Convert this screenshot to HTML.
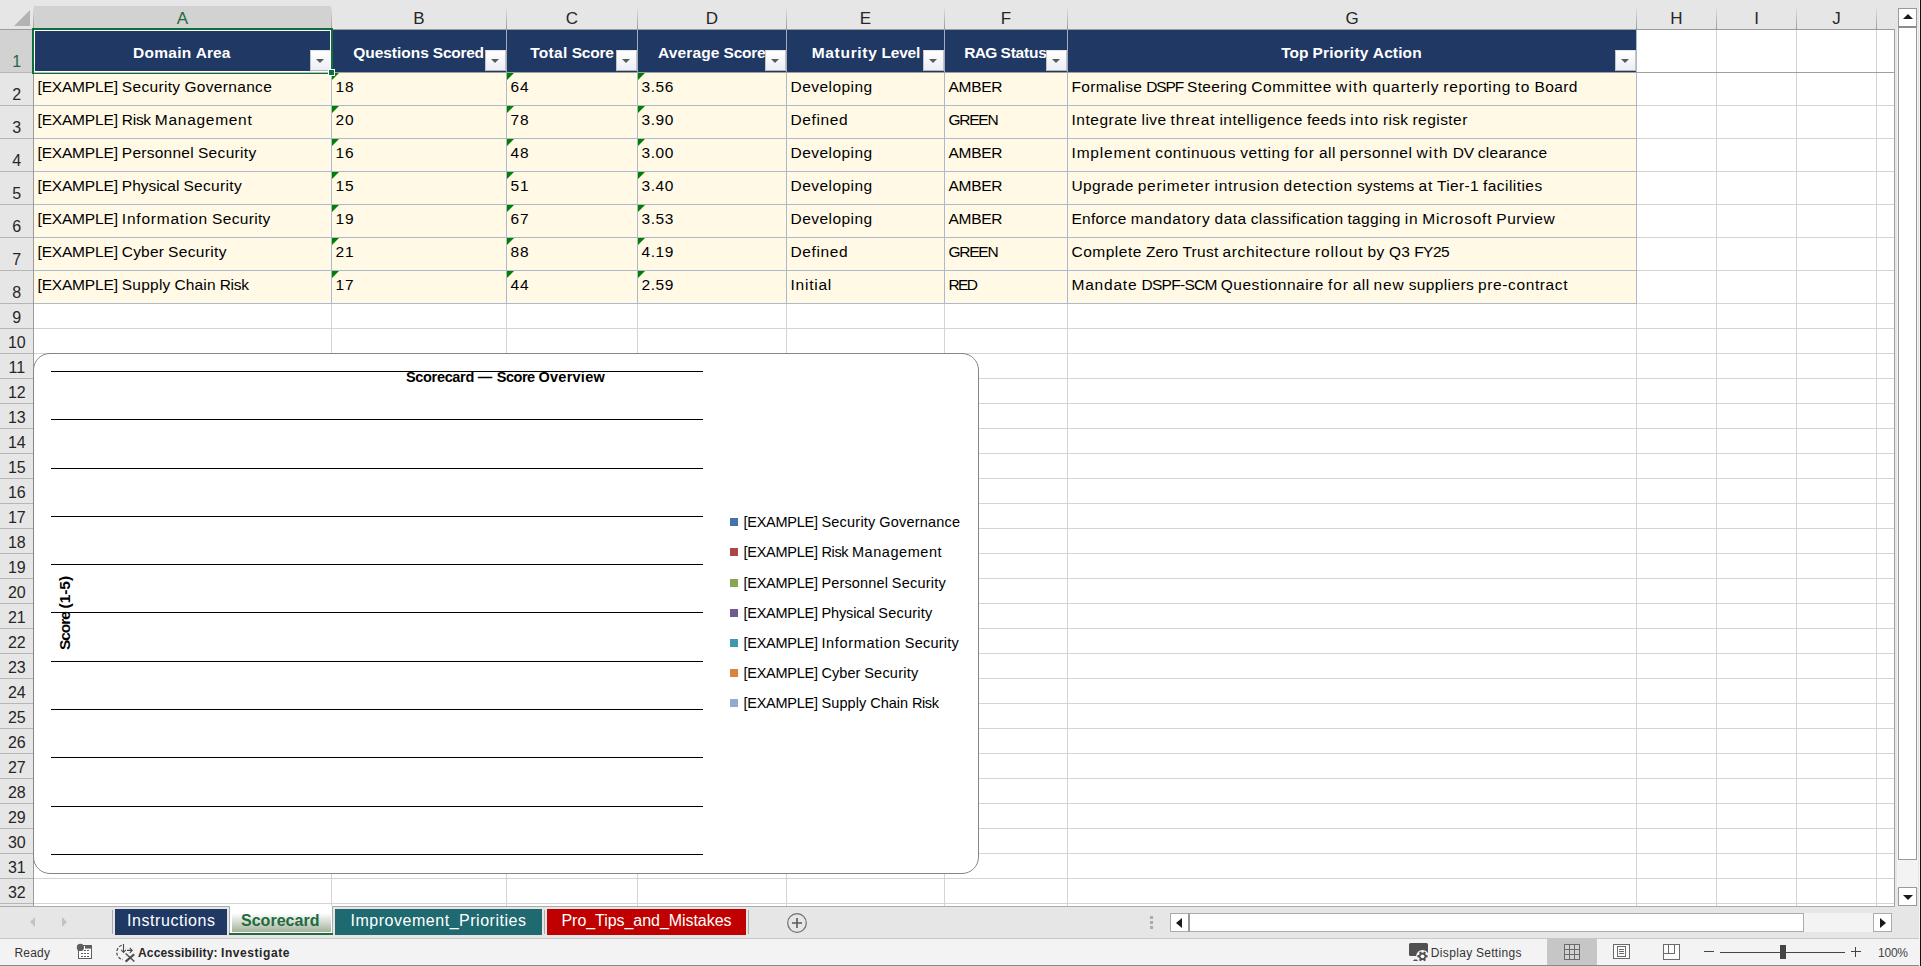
<!DOCTYPE html>
<html lang="en"><head><meta charset="utf-8"><title>Scorecard</title>
<style>
html,body{margin:0;padding:0;background:#e6e6e6;overflow:hidden;}
#app{position:relative;width:1921px;height:966px;overflow:hidden;background:#e6e6e6;font-family:"Liberation Sans",sans-serif;}
#app>div,#app>span,#app>svg{position:absolute;display:block;}
#app>span{white-space:pre;}
</style></head>
<body>
<div id="app">
<div style="left:34px;top:30px;width:1860px;height:876px;background:#fff;"></div>
<div style="left:331px;top:30px;width:1px;height:876px;background:#d4d4d4;"></div>
<div style="left:506px;top:30px;width:1px;height:876px;background:#d4d4d4;"></div>
<div style="left:637px;top:30px;width:1px;height:876px;background:#d4d4d4;"></div>
<div style="left:786px;top:30px;width:1px;height:876px;background:#d4d4d4;"></div>
<div style="left:944px;top:30px;width:1px;height:876px;background:#d4d4d4;"></div>
<div style="left:1067px;top:30px;width:1px;height:876px;background:#d4d4d4;"></div>
<div style="left:1636px;top:30px;width:1px;height:876px;background:#d4d4d4;"></div>
<div style="left:1716px;top:30px;width:1px;height:876px;background:#d4d4d4;"></div>
<div style="left:1796px;top:30px;width:1px;height:876px;background:#d4d4d4;"></div>
<div style="left:1876px;top:30px;width:1px;height:876px;background:#d4d4d4;"></div>
<div style="left:34px;top:72px;width:1860px;height:1px;background:#d4d4d4;"></div>
<div style="left:34px;top:105px;width:1860px;height:1px;background:#d4d4d4;"></div>
<div style="left:34px;top:138px;width:1860px;height:1px;background:#d4d4d4;"></div>
<div style="left:34px;top:171px;width:1860px;height:1px;background:#d4d4d4;"></div>
<div style="left:34px;top:204px;width:1860px;height:1px;background:#d4d4d4;"></div>
<div style="left:34px;top:237px;width:1860px;height:1px;background:#d4d4d4;"></div>
<div style="left:34px;top:270px;width:1860px;height:1px;background:#d4d4d4;"></div>
<div style="left:34px;top:303px;width:1860px;height:1px;background:#d4d4d4;"></div>
<div style="left:34px;top:328px;width:1860px;height:1px;background:#d4d4d4;"></div>
<div style="left:34px;top:353px;width:1860px;height:1px;background:#d4d4d4;"></div>
<div style="left:34px;top:378px;width:1860px;height:1px;background:#d4d4d4;"></div>
<div style="left:34px;top:403px;width:1860px;height:1px;background:#d4d4d4;"></div>
<div style="left:34px;top:428px;width:1860px;height:1px;background:#d4d4d4;"></div>
<div style="left:34px;top:453px;width:1860px;height:1px;background:#d4d4d4;"></div>
<div style="left:34px;top:478px;width:1860px;height:1px;background:#d4d4d4;"></div>
<div style="left:34px;top:503px;width:1860px;height:1px;background:#d4d4d4;"></div>
<div style="left:34px;top:528px;width:1860px;height:1px;background:#d4d4d4;"></div>
<div style="left:34px;top:553px;width:1860px;height:1px;background:#d4d4d4;"></div>
<div style="left:34px;top:578px;width:1860px;height:1px;background:#d4d4d4;"></div>
<div style="left:34px;top:603px;width:1860px;height:1px;background:#d4d4d4;"></div>
<div style="left:34px;top:628px;width:1860px;height:1px;background:#d4d4d4;"></div>
<div style="left:34px;top:653px;width:1860px;height:1px;background:#d4d4d4;"></div>
<div style="left:34px;top:678px;width:1860px;height:1px;background:#d4d4d4;"></div>
<div style="left:34px;top:703px;width:1860px;height:1px;background:#d4d4d4;"></div>
<div style="left:34px;top:728px;width:1860px;height:1px;background:#d4d4d4;"></div>
<div style="left:34px;top:753px;width:1860px;height:1px;background:#d4d4d4;"></div>
<div style="left:34px;top:778px;width:1860px;height:1px;background:#d4d4d4;"></div>
<div style="left:34px;top:803px;width:1860px;height:1px;background:#d4d4d4;"></div>
<div style="left:34px;top:828px;width:1860px;height:1px;background:#d4d4d4;"></div>
<div style="left:34px;top:853px;width:1860px;height:1px;background:#d4d4d4;"></div>
<div style="left:34px;top:878px;width:1860px;height:1px;background:#d4d4d4;"></div>
<div style="left:34px;top:903px;width:1860px;height:1px;background:#d4d4d4;"></div>
<div style="left:34px;top:30px;width:1602px;height:42px;background:#203864;"></div>
<div style="left:331px;top:30px;width:1px;height:42px;background:#a3abbd;"></div>
<div style="left:506px;top:30px;width:1px;height:42px;background:#a3abbd;"></div>
<div style="left:637px;top:30px;width:1px;height:42px;background:#a3abbd;"></div>
<div style="left:786px;top:30px;width:1px;height:42px;background:#a3abbd;"></div>
<div style="left:944px;top:30px;width:1px;height:42px;background:#a3abbd;"></div>
<div style="left:1067px;top:30px;width:1px;height:42px;background:#a3abbd;"></div>
<div style="left:1636px;top:30px;width:1px;height:42px;background:#adb9ca;"></div>
<div style="left:34px;top:73px;width:1602px;height:230px;background:#fff9e6;"></div>
<div style="left:331px;top:73px;width:1px;height:231px;background:#adb9ca;"></div>
<div style="left:506px;top:73px;width:1px;height:231px;background:#adb9ca;"></div>
<div style="left:637px;top:73px;width:1px;height:231px;background:#adb9ca;"></div>
<div style="left:786px;top:73px;width:1px;height:231px;background:#adb9ca;"></div>
<div style="left:944px;top:73px;width:1px;height:231px;background:#adb9ca;"></div>
<div style="left:1067px;top:73px;width:1px;height:231px;background:#adb9ca;"></div>
<div style="left:1636px;top:73px;width:1px;height:231px;background:#adb9ca;"></div>
<div style="left:34px;top:105px;width:1603px;height:1px;background:#adb9ca;"></div>
<div style="left:34px;top:138px;width:1603px;height:1px;background:#adb9ca;"></div>
<div style="left:34px;top:171px;width:1603px;height:1px;background:#adb9ca;"></div>
<div style="left:34px;top:204px;width:1603px;height:1px;background:#adb9ca;"></div>
<div style="left:34px;top:237px;width:1603px;height:1px;background:#adb9ca;"></div>
<div style="left:34px;top:270px;width:1603px;height:1px;background:#adb9ca;"></div>
<div style="left:34px;top:303px;width:1603px;height:1px;background:#adb9ca;"></div>
<div style="left:34px;top:72px;width:1860px;height:1px;background:#a0a0a0;"></div>
<div style="left:34px;top:29px;width:1860px;height:1px;background:#9b9b9b;"></div>
<div style="left:1894px;top:29px;width:1px;height:878px;background:#a0a0a0;"></div>
<div style="left:0px;top:906px;width:1895px;height:1px;background:#ababab;"></div>
<div style="left:332px;top:73px;width:0;height:0;border-top:7px solid #008000;border-right:7px solid transparent"></div>
<div style="left:332px;top:106px;width:0;height:0;border-top:7px solid #008000;border-right:7px solid transparent"></div>
<div style="left:332px;top:139px;width:0;height:0;border-top:7px solid #008000;border-right:7px solid transparent"></div>
<div style="left:332px;top:172px;width:0;height:0;border-top:7px solid #008000;border-right:7px solid transparent"></div>
<div style="left:332px;top:205px;width:0;height:0;border-top:7px solid #008000;border-right:7px solid transparent"></div>
<div style="left:332px;top:238px;width:0;height:0;border-top:7px solid #008000;border-right:7px solid transparent"></div>
<div style="left:332px;top:271px;width:0;height:0;border-top:7px solid #008000;border-right:7px solid transparent"></div>
<div style="left:507px;top:73px;width:0;height:0;border-top:7px solid #008000;border-right:7px solid transparent"></div>
<div style="left:507px;top:106px;width:0;height:0;border-top:7px solid #008000;border-right:7px solid transparent"></div>
<div style="left:507px;top:139px;width:0;height:0;border-top:7px solid #008000;border-right:7px solid transparent"></div>
<div style="left:507px;top:172px;width:0;height:0;border-top:7px solid #008000;border-right:7px solid transparent"></div>
<div style="left:507px;top:205px;width:0;height:0;border-top:7px solid #008000;border-right:7px solid transparent"></div>
<div style="left:507px;top:238px;width:0;height:0;border-top:7px solid #008000;border-right:7px solid transparent"></div>
<div style="left:507px;top:271px;width:0;height:0;border-top:7px solid #008000;border-right:7px solid transparent"></div>
<div style="left:638px;top:73px;width:0;height:0;border-top:7px solid #008000;border-right:7px solid transparent"></div>
<div style="left:638px;top:106px;width:0;height:0;border-top:7px solid #008000;border-right:7px solid transparent"></div>
<div style="left:638px;top:139px;width:0;height:0;border-top:7px solid #008000;border-right:7px solid transparent"></div>
<div style="left:638px;top:172px;width:0;height:0;border-top:7px solid #008000;border-right:7px solid transparent"></div>
<div style="left:638px;top:205px;width:0;height:0;border-top:7px solid #008000;border-right:7px solid transparent"></div>
<div style="left:638px;top:238px;width:0;height:0;border-top:7px solid #008000;border-right:7px solid transparent"></div>
<div style="left:638px;top:271px;width:0;height:0;border-top:7px solid #008000;border-right:7px solid transparent"></div>
<span style="left:133.10px;top:45px;font-size:15.5px;line-height:15.5px;color:#fff;font-weight:700;word-spacing:-0.253px;"><span style="display:inline-block;width:58.48px;letter-spacing:0.273px">Domain</span> <span style="display:inline-block;width:34.96px;letter-spacing:0.123px">Area</span></span>
<span style="left:353.20px;top:45px;font-size:15.5px;line-height:15.5px;color:#fff;font-weight:700;word-spacing:-0.218px;"><span style="display:inline-block;width:75.55px;letter-spacing:-0.027px">Questions</span> <span style="display:inline-block;width:50.85px;letter-spacing:-0.285px">Scored</span></span>
<span style="left:530.15px;top:45px;font-size:15.5px;line-height:15.5px;color:#fff;font-weight:700;word-spacing:-0.136px;"><span style="display:inline-block;width:37.36px;letter-spacing:0.298px">Total</span> <span style="display:inline-block;width:41.96px;letter-spacing:-0.227px">Score</span></span>
<span style="left:658.10px;top:45px;font-size:15.5px;line-height:15.5px;color:#fff;font-weight:700;word-spacing:-0.163px;"><span style="display:inline-block;width:61.36px;letter-spacing:0.107px">Average</span> <span style="display:inline-block;width:41.69px;letter-spacing:-0.280px">Score</span></span>
<span style="left:811.70px;top:45px;font-size:15.5px;line-height:15.5px;color:#fff;font-weight:700;word-spacing:-0.248px;"><span style="display:inline-block;width:65.86px;letter-spacing:0.696px">Maturity</span> <span style="display:inline-block;width:38.37px;letter-spacing:-0.253px">Level</span></span>
<span style="left:964.30px;top:45px;font-size:15.5px;line-height:15.5px;color:#fff;font-weight:700;word-spacing:-0.259px;"><span style="display:inline-block;width:32.16px;letter-spacing:-0.764px">RAG</span> <span style="display:inline-block;width:46.19px;letter-spacing:-0.198px">Status</span></span>
<span style="left:1281.30px;top:45px;font-size:15.5px;line-height:15.5px;color:#fff;font-weight:700;word-spacing:-0.196px;"><span style="display:inline-block;width:27.00px;letter-spacing:-0.089px">Top</span> <span style="display:inline-block;width:56.30px;letter-spacing:0.254px">Priority</span> <span style="display:inline-block;width:48.87px;letter-spacing:0.108px">Action</span></span>
<span style="left:37.50px;top:79px;font-size:15.5px;line-height:15.5px;color:#000;word-spacing:-0.261px;"><span style="display:inline-block;width:80.27px;letter-spacing:-0.175px">[EXAMPLE]</span> <span style="display:inline-block;width:58.62px;letter-spacing:0.327px">Security</span> <span style="display:inline-block;width:87.67px;letter-spacing:0.321px">Governance</span></span>
<span style="left:335.50px;top:79px;font-size:15.5px;line-height:15.5px;color:#000;letter-spacing:0.916px;">18</span>
<span style="left:510.50px;top:79px;font-size:15.5px;line-height:15.5px;color:#000;letter-spacing:0.916px;">64</span>
<span style="left:641.50px;top:79px;font-size:15.5px;line-height:15.5px;color:#000;letter-spacing:0.534px;">3.56</span>
<span style="left:790.50px;top:79px;font-size:15.5px;line-height:15.5px;color:#000;letter-spacing:0.452px;">Developing</span>
<span style="left:948.50px;top:79px;font-size:15.5px;line-height:15.5px;color:#000;letter-spacing:-0.302px;">AMBER</span>
<span style="left:1071.50px;top:79px;font-size:15.5px;line-height:15.5px;color:#000;word-spacing:-0.261px;"><span style="display:inline-block;width:70.74px;letter-spacing:0.299px">Formalise</span> <span style="display:inline-block;width:36.75px;letter-spacing:-1.148px">DSPF</span> <span style="display:inline-block;width:60.09px;letter-spacing:0.294px">Steering</span> <span style="display:inline-block;width:80.76px;letter-spacing:0.647px">Committee</span> <span style="display:inline-block;width:32.34px;letter-spacing:1.191px">with</span> <span style="display:inline-block;width:66.86px;letter-spacing:0.728px">quarterly</span> <span style="display:inline-block;width:67.87px;letter-spacing:0.743px">reporting</span> <span style="display:inline-block;width:15.28px;letter-spacing:1.170px">to</span> <span style="display:inline-block;width:43.20px;letter-spacing:0.365px">Board</span></span>
<span style="left:37.50px;top:112px;font-size:15.5px;line-height:15.5px;color:#000;word-spacing:-0.261px;"><span style="display:inline-block;width:80.27px;letter-spacing:-0.175px">[EXAMPLE]</span> <span style="display:inline-block;width:29.00px;letter-spacing:-0.286px">Risk</span> <span style="display:inline-block;width:97.59px;letter-spacing:0.711px">Management</span></span>
<span style="left:335.50px;top:112px;font-size:15.5px;line-height:15.5px;color:#000;letter-spacing:0.916px;">20</span>
<span style="left:510.50px;top:112px;font-size:15.5px;line-height:15.5px;color:#000;letter-spacing:0.916px;">78</span>
<span style="left:641.50px;top:112px;font-size:15.5px;line-height:15.5px;color:#000;letter-spacing:0.534px;">3.90</span>
<span style="left:790.50px;top:112px;font-size:15.5px;line-height:15.5px;color:#000;letter-spacing:0.596px;">Defined</span>
<span style="left:948.50px;top:112px;font-size:15.5px;line-height:15.5px;color:#000;letter-spacing:-1.255px;">GREEN</span>
<span style="left:1071.50px;top:112px;font-size:15.5px;line-height:15.5px;color:#000;word-spacing:-0.261px;"><span style="display:inline-block;width:65.95px;letter-spacing:0.529px">Integrate</span> <span style="display:inline-block;width:25.06px;letter-spacing:0.449px">live</span> <span style="display:inline-block;width:44.77px;letter-spacing:0.854px">threat</span> <span style="display:inline-block;width:83.54px;letter-spacing:0.498px">intelligence</span> <span style="display:inline-block;width:39.28px;letter-spacing:0.271px">feeds</span> <span style="display:inline-block;width:28.64px;letter-spacing:0.910px">into</span> <span style="display:inline-block;width:25.52px;letter-spacing:0.352px">risk</span> <span style="display:inline-block;width:55.26px;letter-spacing:0.446px">register</span></span>
<span style="left:37.50px;top:145px;font-size:15.5px;line-height:15.5px;color:#000;word-spacing:-0.261px;"><span style="display:inline-block;width:80.27px;letter-spacing:-0.175px">[EXAMPLE]</span> <span style="display:inline-block;width:72.08px;letter-spacing:0.253px">Personnel</span> <span style="display:inline-block;width:58.62px;letter-spacing:0.327px">Security</span></span>
<span style="left:335.50px;top:145px;font-size:15.5px;line-height:15.5px;color:#000;letter-spacing:0.916px;">16</span>
<span style="left:510.50px;top:145px;font-size:15.5px;line-height:15.5px;color:#000;letter-spacing:0.916px;">48</span>
<span style="left:641.50px;top:145px;font-size:15.5px;line-height:15.5px;color:#000;letter-spacing:0.534px;">3.00</span>
<span style="left:790.50px;top:145px;font-size:15.5px;line-height:15.5px;color:#000;letter-spacing:0.452px;">Developing</span>
<span style="left:948.50px;top:145px;font-size:15.5px;line-height:15.5px;color:#000;letter-spacing:-0.302px;">AMBER</span>
<span style="left:1071.50px;top:145px;font-size:15.5px;line-height:15.5px;color:#000;word-spacing:-0.261px;"><span style="display:inline-block;width:79.76px;letter-spacing:0.820px">Implement</span> <span style="display:inline-block;width:80.82px;letter-spacing:0.583px">continuous</span> <span style="display:inline-block;width:49.93px;letter-spacing:0.608px">vetting</span> <span style="display:inline-block;width:20.79px;letter-spacing:0.899px">for</span> <span style="display:inline-block;width:16.81px;letter-spacing:0.431px">all</span> <span style="display:inline-block;width:72.59px;letter-spacing:0.501px">personnel</span> <span style="display:inline-block;width:32.34px;letter-spacing:1.191px">with</span> <span style="display:inline-block;width:20.98px;letter-spacing:-0.282px">DV</span> <span style="display:inline-block;width:69.57px;letter-spacing:0.261px">clearance</span></span>
<span style="left:37.50px;top:178px;font-size:15.5px;line-height:15.5px;color:#000;word-spacing:-0.261px;"><span style="display:inline-block;width:80.27px;letter-spacing:-0.175px">[EXAMPLE]</span> <span style="display:inline-block;width:57.53px;letter-spacing:-0.023px">Physical</span> <span style="display:inline-block;width:58.62px;letter-spacing:0.327px">Security</span></span>
<span style="left:335.50px;top:178px;font-size:15.5px;line-height:15.5px;color:#000;letter-spacing:0.916px;">15</span>
<span style="left:510.50px;top:178px;font-size:15.5px;line-height:15.5px;color:#000;letter-spacing:0.916px;">51</span>
<span style="left:641.50px;top:178px;font-size:15.5px;line-height:15.5px;color:#000;letter-spacing:0.534px;">3.40</span>
<span style="left:790.50px;top:178px;font-size:15.5px;line-height:15.5px;color:#000;letter-spacing:0.452px;">Developing</span>
<span style="left:948.50px;top:178px;font-size:15.5px;line-height:15.5px;color:#000;letter-spacing:-0.302px;">AMBER</span>
<span style="left:1071.50px;top:178px;font-size:15.5px;line-height:15.5px;color:#000;word-spacing:-0.261px;"><span style="display:inline-block;width:62.14px;letter-spacing:0.382px">Upgrade</span> <span style="display:inline-block;width:72.80px;letter-spacing:0.815px">perimeter</span> <span style="display:inline-block;width:65.01px;letter-spacing:0.713px">intrusion</span> <span style="display:inline-block;width:69.39px;letter-spacing:0.719px">detection</span> <span style="display:inline-block;width:57.49px;letter-spacing:0.092px">systems</span> <span style="display:inline-block;width:14.42px;letter-spacing:0.741px">at</span> <span style="display:inline-block;width:42.06px;letter-spacing:0.358px">Tier-1</span> <span style="display:inline-block;width:59.53px;letter-spacing:0.439px">facilities</span></span>
<span style="left:37.50px;top:211px;font-size:15.5px;line-height:15.5px;color:#000;word-spacing:-0.261px;"><span style="display:inline-block;width:80.27px;letter-spacing:-0.175px">[EXAMPLE]</span> <span style="display:inline-block;width:86.20px;letter-spacing:0.786px">Information</span> <span style="display:inline-block;width:58.62px;letter-spacing:0.327px">Security</span></span>
<span style="left:335.50px;top:211px;font-size:15.5px;line-height:15.5px;color:#000;letter-spacing:0.916px;">19</span>
<span style="left:510.50px;top:211px;font-size:15.5px;line-height:15.5px;color:#000;letter-spacing:0.916px;">67</span>
<span style="left:641.50px;top:211px;font-size:15.5px;line-height:15.5px;color:#000;letter-spacing:0.534px;">3.53</span>
<span style="left:790.50px;top:211px;font-size:15.5px;line-height:15.5px;color:#000;letter-spacing:0.452px;">Developing</span>
<span style="left:948.50px;top:211px;font-size:15.5px;line-height:15.5px;color:#000;letter-spacing:-0.302px;">AMBER</span>
<span style="left:1071.50px;top:211px;font-size:15.5px;line-height:15.5px;color:#000;word-spacing:-0.261px;"><span style="display:inline-block;width:55.08px;letter-spacing:0.237px">Enforce</span> <span style="display:inline-block;width:79.87px;letter-spacing:0.737px">mandatory</span> <span style="display:inline-block;width:32.20px;letter-spacing:0.507px">data</span> <span style="display:inline-block;width:92.58px;letter-spacing:0.336px">classification</span> <span style="display:inline-block;width:53.37px;letter-spacing:0.358px">tagging</span> <span style="display:inline-block;width:13.53px;letter-spacing:0.725px">in</span> <span style="display:inline-block;width:69.91px;letter-spacing:0.782px">Microsoft</span> <span style="display:inline-block;width:58.93px;letter-spacing:0.542px">Purview</span></span>
<span style="left:37.50px;top:244px;font-size:15.5px;line-height:15.5px;color:#000;word-spacing:-0.261px;"><span style="display:inline-block;width:80.27px;letter-spacing:-0.175px">[EXAMPLE]</span> <span style="display:inline-block;width:42.25px;letter-spacing:0.177px">Cyber</span> <span style="display:inline-block;width:58.62px;letter-spacing:0.327px">Security</span></span>
<span style="left:335.50px;top:244px;font-size:15.5px;line-height:15.5px;color:#000;letter-spacing:0.916px;">21</span>
<span style="left:510.50px;top:244px;font-size:15.5px;line-height:15.5px;color:#000;letter-spacing:0.916px;">88</span>
<span style="left:641.50px;top:244px;font-size:15.5px;line-height:15.5px;color:#000;letter-spacing:0.534px;">4.19</span>
<span style="left:790.50px;top:244px;font-size:15.5px;line-height:15.5px;color:#000;letter-spacing:0.596px;">Defined</span>
<span style="left:948.50px;top:244px;font-size:15.5px;line-height:15.5px;color:#000;letter-spacing:-1.255px;">GREEN</span>
<span style="left:1071.50px;top:244px;font-size:15.5px;line-height:15.5px;color:#000;word-spacing:-0.261px;"><span style="display:inline-block;width:70.40px;letter-spacing:0.507px">Complete</span> <span style="display:inline-block;width:32.45px;letter-spacing:0.143px">Zero</span> <span style="display:inline-block;width:36.09px;letter-spacing:0.272px">Trust</span> <span style="display:inline-block;width:88.33px;letter-spacing:0.612px">architecture</span> <span style="display:inline-block;width:48.50px;letter-spacing:0.898px">rollout</span> <span style="display:inline-block;width:17.44px;letter-spacing:0.532px">by</span> <span style="display:inline-block;width:21.14px;letter-spacing:0.227px">Q3</span> <span style="display:inline-block;width:35.13px;letter-spacing:-0.482px">FY25</span></span>
<span style="left:37.50px;top:277px;font-size:15.5px;line-height:15.5px;color:#000;word-spacing:-0.261px;"><span style="display:inline-block;width:80.27px;letter-spacing:-0.175px">[EXAMPLE]</span> <span style="display:inline-block;width:48.70px;letter-spacing:0.216px">Supply</span> <span style="display:inline-block;width:41.08px;letter-spacing:0.116px">Chain</span> <span style="display:inline-block;width:29.00px;letter-spacing:-0.286px">Risk</span></span>
<span style="left:335.50px;top:277px;font-size:15.5px;line-height:15.5px;color:#000;letter-spacing:0.916px;">17</span>
<span style="left:510.50px;top:277px;font-size:15.5px;line-height:15.5px;color:#000;letter-spacing:0.916px;">44</span>
<span style="left:641.50px;top:277px;font-size:15.5px;line-height:15.5px;color:#000;letter-spacing:0.534px;">2.59</span>
<span style="left:790.50px;top:277px;font-size:15.5px;line-height:15.5px;color:#000;letter-spacing:0.756px;">Initial</span>
<span style="left:948.50px;top:277px;font-size:15.5px;line-height:15.5px;color:#000;letter-spacing:-1.615px;">RED</span>
<span style="left:1071.50px;top:277px;font-size:15.5px;line-height:15.5px;color:#000;word-spacing:-0.261px;"><span style="display:inline-block;width:65.88px;letter-spacing:0.793px">Mandate</span> <span style="display:inline-block;width:75.35px;letter-spacing:-0.701px">DSPF-SCM</span> <span style="display:inline-block;width:103.08px;letter-spacing:0.505px">Questionnaire</span> <span style="display:inline-block;width:20.79px;letter-spacing:0.899px">for</span> <span style="display:inline-block;width:16.81px;letter-spacing:0.431px">all</span> <span style="display:inline-block;width:31.05px;letter-spacing:0.872px">new</span> <span style="display:inline-block;width:65.35px;letter-spacing:0.368px">suppliers</span> <span style="display:inline-block;width:90.01px;letter-spacing:0.609px">pre-contract</span></span>
<div style="left:310px;top:50px;width:21px;height:21px;box-sizing:border-box;border:1px solid #c4c4c4;border-top-color:#e4e4e4;border-bottom-color:#b4b4b4;background:linear-gradient(#ffffff,#eceef4)"></div>
<div style="left:316px;top:59px;width:0;height:0;border-left:4px solid transparent;border-right:4px solid transparent;border-top:4px solid #5a5a5a"></div>
<div style="left:485px;top:50px;width:21px;height:21px;box-sizing:border-box;border:1px solid #c4c4c4;border-top-color:#e4e4e4;border-bottom-color:#b4b4b4;background:linear-gradient(#ffffff,#eceef4)"></div>
<div style="left:491px;top:59px;width:0;height:0;border-left:4px solid transparent;border-right:4px solid transparent;border-top:4px solid #5a5a5a"></div>
<div style="left:616px;top:50px;width:21px;height:21px;box-sizing:border-box;border:1px solid #c4c4c4;border-top-color:#e4e4e4;border-bottom-color:#b4b4b4;background:linear-gradient(#ffffff,#eceef4)"></div>
<div style="left:622px;top:59px;width:0;height:0;border-left:4px solid transparent;border-right:4px solid transparent;border-top:4px solid #5a5a5a"></div>
<div style="left:765px;top:50px;width:21px;height:21px;box-sizing:border-box;border:1px solid #c4c4c4;border-top-color:#e4e4e4;border-bottom-color:#b4b4b4;background:linear-gradient(#ffffff,#eceef4)"></div>
<div style="left:771px;top:59px;width:0;height:0;border-left:4px solid transparent;border-right:4px solid transparent;border-top:4px solid #5a5a5a"></div>
<div style="left:923px;top:50px;width:21px;height:21px;box-sizing:border-box;border:1px solid #c4c4c4;border-top-color:#e4e4e4;border-bottom-color:#b4b4b4;background:linear-gradient(#ffffff,#eceef4)"></div>
<div style="left:929px;top:59px;width:0;height:0;border-left:4px solid transparent;border-right:4px solid transparent;border-top:4px solid #5a5a5a"></div>
<div style="left:1046px;top:50px;width:21px;height:21px;box-sizing:border-box;border:1px solid #c4c4c4;border-top-color:#e4e4e4;border-bottom-color:#b4b4b4;background:linear-gradient(#ffffff,#eceef4)"></div>
<div style="left:1052px;top:59px;width:0;height:0;border-left:4px solid transparent;border-right:4px solid transparent;border-top:4px solid #5a5a5a"></div>
<div style="left:1615px;top:50px;width:21px;height:21px;box-sizing:border-box;border:1px solid #c4c4c4;border-top-color:#e4e4e4;border-bottom-color:#b4b4b4;background:linear-gradient(#ffffff,#eceef4)"></div>
<div style="left:1621px;top:59px;width:0;height:0;border-left:4px solid transparent;border-right:4px solid transparent;border-top:4px solid #5a5a5a"></div>
<div style="left:34px;top:6px;width:297px;height:22px;background:#d2d2d2;"></div>
<div style="left:33px;top:6px;width:1px;height:23px;background:linear-gradient(#e6e6e6,#9b9b9b);"></div>
<div style="left:331px;top:6px;width:1px;height:23px;background:linear-gradient(#e6e6e6,#9b9b9b);"></div>
<div style="left:506px;top:6px;width:1px;height:23px;background:linear-gradient(#e6e6e6,#9b9b9b);"></div>
<div style="left:637px;top:6px;width:1px;height:23px;background:linear-gradient(#e6e6e6,#9b9b9b);"></div>
<div style="left:786px;top:6px;width:1px;height:23px;background:linear-gradient(#e6e6e6,#9b9b9b);"></div>
<div style="left:944px;top:6px;width:1px;height:23px;background:linear-gradient(#e6e6e6,#9b9b9b);"></div>
<div style="left:1067px;top:6px;width:1px;height:23px;background:linear-gradient(#e6e6e6,#9b9b9b);"></div>
<div style="left:1636px;top:6px;width:1px;height:23px;background:linear-gradient(#e6e6e6,#9b9b9b);"></div>
<div style="left:1716px;top:6px;width:1px;height:23px;background:linear-gradient(#e6e6e6,#9b9b9b);"></div>
<div style="left:1796px;top:6px;width:1px;height:23px;background:linear-gradient(#e6e6e6,#9b9b9b);"></div>
<div style="left:1876px;top:6px;width:1px;height:23px;background:linear-gradient(#e6e6e6,#9b9b9b);"></div>
<span style="left:176.83px;top:10px;font-size:17px;line-height:17px;color:#1e6b3e;">A</span>
<span style="left:413.33px;top:10px;font-size:17px;line-height:17px;color:#262626;">B</span>
<span style="left:565.86px;top:10px;font-size:17px;line-height:17px;color:#262626;">C</span>
<span style="left:705.86px;top:10px;font-size:17px;line-height:17px;color:#262626;">D</span>
<span style="left:859.83px;top:10px;font-size:17px;line-height:17px;color:#262626;">E</span>
<span style="left:1000.80px;top:10px;font-size:17px;line-height:17px;color:#262626;">F</span>
<span style="left:1345.38px;top:10px;font-size:17px;line-height:17px;color:#262626;">G</span>
<span style="left:1670.36px;top:10px;font-size:17px;line-height:17px;color:#262626;">H</span>
<span style="left:1754.13px;top:10px;font-size:17px;line-height:17px;color:#262626;">I</span>
<span style="left:1832.25px;top:10px;font-size:17px;line-height:17px;color:#262626;">J</span>
<div style="left:14px;top:10px;width:0;height:0;border-bottom:16px solid #b3b3b3;border-left:16px solid transparent"></div>
<div style="left:0px;top:30px;width:33px;height:42px;background:#d2d2d2;"></div>
<div style="left:33px;top:29px;width:1px;height:877px;background:#9b9b9b;"></div>
<div style="left:0px;top:29px;width:33px;height:1px;background:#9b9b9b;"></div>
<div style="left:0px;top:72px;width:33px;height:1px;background:#b6b6b6;"></div>
<div style="left:0px;top:105px;width:33px;height:1px;background:#b6b6b6;"></div>
<div style="left:0px;top:138px;width:33px;height:1px;background:#b6b6b6;"></div>
<div style="left:0px;top:171px;width:33px;height:1px;background:#b6b6b6;"></div>
<div style="left:0px;top:204px;width:33px;height:1px;background:#b6b6b6;"></div>
<div style="left:0px;top:237px;width:33px;height:1px;background:#b6b6b6;"></div>
<div style="left:0px;top:270px;width:33px;height:1px;background:#b6b6b6;"></div>
<div style="left:0px;top:303px;width:33px;height:1px;background:#b6b6b6;"></div>
<div style="left:0px;top:328px;width:33px;height:1px;background:#b6b6b6;"></div>
<div style="left:0px;top:353px;width:33px;height:1px;background:#b6b6b6;"></div>
<div style="left:0px;top:378px;width:33px;height:1px;background:#b6b6b6;"></div>
<div style="left:0px;top:403px;width:33px;height:1px;background:#b6b6b6;"></div>
<div style="left:0px;top:428px;width:33px;height:1px;background:#b6b6b6;"></div>
<div style="left:0px;top:453px;width:33px;height:1px;background:#b6b6b6;"></div>
<div style="left:0px;top:478px;width:33px;height:1px;background:#b6b6b6;"></div>
<div style="left:0px;top:503px;width:33px;height:1px;background:#b6b6b6;"></div>
<div style="left:0px;top:528px;width:33px;height:1px;background:#b6b6b6;"></div>
<div style="left:0px;top:553px;width:33px;height:1px;background:#b6b6b6;"></div>
<div style="left:0px;top:578px;width:33px;height:1px;background:#b6b6b6;"></div>
<div style="left:0px;top:603px;width:33px;height:1px;background:#b6b6b6;"></div>
<div style="left:0px;top:628px;width:33px;height:1px;background:#b6b6b6;"></div>
<div style="left:0px;top:653px;width:33px;height:1px;background:#b6b6b6;"></div>
<div style="left:0px;top:678px;width:33px;height:1px;background:#b6b6b6;"></div>
<div style="left:0px;top:703px;width:33px;height:1px;background:#b6b6b6;"></div>
<div style="left:0px;top:728px;width:33px;height:1px;background:#b6b6b6;"></div>
<div style="left:0px;top:753px;width:33px;height:1px;background:#b6b6b6;"></div>
<div style="left:0px;top:778px;width:33px;height:1px;background:#b6b6b6;"></div>
<div style="left:0px;top:803px;width:33px;height:1px;background:#b6b6b6;"></div>
<div style="left:0px;top:828px;width:33px;height:1px;background:#b6b6b6;"></div>
<div style="left:0px;top:853px;width:33px;height:1px;background:#b6b6b6;"></div>
<div style="left:0px;top:878px;width:33px;height:1px;background:#b6b6b6;"></div>
<div style="left:0px;top:903px;width:33px;height:1px;background:#b6b6b6;"></div>
<span style="left:12.35px;top:54px;font-size:16px;line-height:16px;color:#1e6b3e;">1</span>
<span style="left:12.35px;top:87px;font-size:16px;line-height:16px;color:#262626;">2</span>
<span style="left:12.35px;top:120px;font-size:16px;line-height:16px;color:#262626;">3</span>
<span style="left:12.35px;top:153px;font-size:16px;line-height:16px;color:#262626;">4</span>
<span style="left:12.35px;top:186px;font-size:16px;line-height:16px;color:#262626;">5</span>
<span style="left:12.35px;top:219px;font-size:16px;line-height:16px;color:#262626;">6</span>
<span style="left:12.35px;top:252px;font-size:16px;line-height:16px;color:#262626;">7</span>
<span style="left:12.35px;top:285px;font-size:16px;line-height:16px;color:#262626;">8</span>
<span style="left:12.35px;top:310px;font-size:16px;line-height:16px;color:#262626;">9</span>
<span style="left:7.90px;top:335px;font-size:16px;line-height:16px;color:#262626;">10</span>
<span style="left:8.50px;top:360px;font-size:16px;line-height:16px;color:#262626;">11</span>
<span style="left:7.90px;top:385px;font-size:16px;line-height:16px;color:#262626;">12</span>
<span style="left:7.90px;top:410px;font-size:16px;line-height:16px;color:#262626;">13</span>
<span style="left:7.90px;top:435px;font-size:16px;line-height:16px;color:#262626;">14</span>
<span style="left:7.90px;top:460px;font-size:16px;line-height:16px;color:#262626;">15</span>
<span style="left:7.90px;top:485px;font-size:16px;line-height:16px;color:#262626;">16</span>
<span style="left:7.90px;top:510px;font-size:16px;line-height:16px;color:#262626;">17</span>
<span style="left:7.90px;top:535px;font-size:16px;line-height:16px;color:#262626;">18</span>
<span style="left:7.90px;top:560px;font-size:16px;line-height:16px;color:#262626;">19</span>
<span style="left:7.90px;top:585px;font-size:16px;line-height:16px;color:#262626;">20</span>
<span style="left:7.90px;top:610px;font-size:16px;line-height:16px;color:#262626;">21</span>
<span style="left:7.90px;top:635px;font-size:16px;line-height:16px;color:#262626;">22</span>
<span style="left:7.90px;top:660px;font-size:16px;line-height:16px;color:#262626;">23</span>
<span style="left:7.90px;top:685px;font-size:16px;line-height:16px;color:#262626;">24</span>
<span style="left:7.90px;top:710px;font-size:16px;line-height:16px;color:#262626;">25</span>
<span style="left:7.90px;top:735px;font-size:16px;line-height:16px;color:#262626;">26</span>
<span style="left:7.90px;top:760px;font-size:16px;line-height:16px;color:#262626;">27</span>
<span style="left:7.90px;top:785px;font-size:16px;line-height:16px;color:#262626;">28</span>
<span style="left:7.90px;top:810px;font-size:16px;line-height:16px;color:#262626;">29</span>
<span style="left:7.90px;top:835px;font-size:16px;line-height:16px;color:#262626;">30</span>
<span style="left:7.90px;top:860px;font-size:16px;line-height:16px;color:#262626;">31</span>
<span style="left:7.90px;top:885px;font-size:16px;line-height:16px;color:#262626;">32</span>
<div style="left:32px;top:28px;width:301px;height:46px;box-sizing:border-box;border:2px solid #0f6e3a"></div>
<div style="left:34px;top:30px;width:297px;height:42px;box-sizing:border-box;border:1px solid #fff"></div>
<div style="left:34px;top:72px;width:295px;height:1px;background:#b5c2b9;"></div>
<div style="left:328px;top:69px;width:7px;height:7px;background:#fff;"></div>
<div style="left:329px;top:70px;width:5px;height:5px;background:#0f6e3a;"></div>
<div style="left:33px;top:353px;width:946px;height:521px;box-sizing:border-box;border:1px solid #868686;border-radius:17px;background:#fff"></div>
<div style="left:51px;top:371px;width:652px;height:1px;background:#000;"></div>
<div style="left:51px;top:419px;width:652px;height:1px;background:#000;"></div>
<div style="left:51px;top:468px;width:652px;height:1px;background:#000;"></div>
<div style="left:51px;top:516px;width:652px;height:1px;background:#000;"></div>
<div style="left:51px;top:564px;width:652px;height:1px;background:#000;"></div>
<div style="left:51px;top:612px;width:652px;height:1px;background:#000;"></div>
<div style="left:51px;top:661px;width:652px;height:1px;background:#000;"></div>
<div style="left:51px;top:709px;width:652px;height:1px;background:#000;"></div>
<div style="left:51px;top:757px;width:652px;height:1px;background:#000;"></div>
<div style="left:51px;top:806px;width:652px;height:1px;background:#000;"></div>
<div style="left:51px;top:854px;width:652px;height:1px;background:#000;"></div>
<span style="left:406.00px;top:370px;font-size:14.5px;line-height:14.5px;color:#000;font-weight:700;word-spacing:-0.245px;"><span style="display:inline-block;width:67.95px;letter-spacing:-0.332px">Scorecard</span> <span style="display:inline-block;width:15.16px;letter-spacing:0.000px">—</span> <span style="display:inline-block;width:38.04px;letter-spacing:-0.455px">Score</span> <span style="display:inline-block;width:66.49px;letter-spacing:0.249px">Overview</span></span>
<span style="left:69.60px;top:650px;transform-origin:0 0;transform:rotate(-90deg) translate(0,-13px);font-size:15.5px;line-height:15.5px;color:#000;font-weight:700;word-spacing:-0.545px;"><span style="display:inline-block;width:37.85px;letter-spacing:-1.048px">Score</span> <span style="display:inline-block;width:32.38px;letter-spacing:-0.071px">(1-5)</span></span>
<div style="left:730px;top:518px;width:8px;height:8px;background:#4572a7;"></div>
<span style="left:743.50px;top:515px;font-size:14.5px;line-height:14.5px;color:#000;word-spacing:-0.287px;"><span style="display:inline-block;width:74.18px;letter-spacing:-0.265px">[EXAMPLE]</span> <span style="display:inline-block;width:54.17px;letter-spacing:0.222px">Security</span> <span style="display:inline-block;width:81.01px;letter-spacing:0.201px">Governance</span></span>
<div style="left:730px;top:548px;width:8px;height:8px;background:#aa4643;"></div>
<span style="left:743.50px;top:545px;font-size:14.5px;line-height:14.5px;color:#000;word-spacing:-0.287px;"><span style="display:inline-block;width:74.18px;letter-spacing:-0.265px">[EXAMPLE]</span> <span style="display:inline-block;width:26.80px;letter-spacing:-0.351px">Risk</span> <span style="display:inline-block;width:90.18px;letter-spacing:0.554px">Management</span></span>
<div style="left:730px;top:579px;width:8px;height:8px;background:#89a54e;"></div>
<span style="left:743.50px;top:576px;font-size:14.5px;line-height:14.5px;color:#000;word-spacing:-0.287px;"><span style="display:inline-block;width:74.18px;letter-spacing:-0.265px">[EXAMPLE]</span> <span style="display:inline-block;width:66.61px;letter-spacing:0.145px">Personnel</span> <span style="display:inline-block;width:54.17px;letter-spacing:0.222px">Security</span></span>
<div style="left:730px;top:609px;width:8px;height:8px;background:#71588f;"></div>
<span style="left:743.50px;top:606px;font-size:14.5px;line-height:14.5px;color:#000;word-spacing:-0.287px;"><span style="display:inline-block;width:74.18px;letter-spacing:-0.265px">[EXAMPLE]</span> <span style="display:inline-block;width:53.17px;letter-spacing:-0.104px">Physical</span> <span style="display:inline-block;width:54.17px;letter-spacing:0.222px">Security</span></span>
<div style="left:730px;top:639px;width:8px;height:8px;background:#4198af;"></div>
<span style="left:743.50px;top:636px;font-size:14.5px;line-height:14.5px;color:#000;word-spacing:-0.287px;"><span style="display:inline-block;width:74.18px;letter-spacing:-0.265px">[EXAMPLE]</span> <span style="display:inline-block;width:79.65px;letter-spacing:0.646px">Information</span> <span style="display:inline-block;width:54.17px;letter-spacing:0.222px">Security</span></span>
<div style="left:730px;top:669px;width:8px;height:8px;background:#db843d;"></div>
<span style="left:743.50px;top:666px;font-size:14.5px;line-height:14.5px;color:#000;word-spacing:-0.287px;"><span style="display:inline-block;width:74.18px;letter-spacing:-0.265px">[EXAMPLE]</span> <span style="display:inline-block;width:39.04px;letter-spacing:0.071px">Cyber</span> <span style="display:inline-block;width:54.17px;letter-spacing:0.222px">Security</span></span>
<div style="left:730px;top:699px;width:8px;height:8px;background:#93a9cf;"></div>
<span style="left:743.50px;top:696px;font-size:14.5px;line-height:14.5px;color:#000;word-spacing:-0.287px;"><span style="display:inline-block;width:74.18px;letter-spacing:-0.265px">[EXAMPLE]</span> <span style="display:inline-block;width:45.01px;letter-spacing:0.111px">Supply</span> <span style="display:inline-block;width:37.96px;letter-spacing:0.015px">Chain</span> <span style="display:inline-block;width:26.80px;letter-spacing:-0.351px">Risk</span></span>
<div style="left:0px;top:907px;width:1921px;height:31px;background:#e6e6e6;"></div>
<div style="left:30px;top:917px;width:0;height:0;border-top:5px solid transparent;border-bottom:5px solid transparent;border-right:5px solid #c3c3c3"></div>
<div style="left:62px;top:917px;width:0;height:0;border-top:5px solid transparent;border-bottom:5px solid transparent;border-left:5px solid #c3c3c3"></div>
<div style="left:112px;top:910px;width:1px;height:24px;background:#ababab;"></div>
<div style="left:115px;top:909px;width:112px;height:26px;background:#203864;"></div>
<span style="left:127.00px;top:913px;font-size:16px;line-height:16px;color:#fff;letter-spacing:0.562px;">Instructions</span>
<div style="left:229px;top:906px;width:104px;height:29px;background:#fff;border-left:1px solid #ababab;border-right:1px solid #ababab;box-sizing:border-box"></div>
<div style="left:232px;top:907px;width:99px;height:25px;background:linear-gradient(#ffffff 0%,#ffffff 25%,#a3b19c 100%);"></div>
<div style="left:229px;top:933px;width:104px;height:2px;background:#1e6b3e;"></div>
<span style="left:241.00px;top:913px;font-size:16px;line-height:16px;color:#1e6b3e;font-weight:700;letter-spacing:0.017px;">Scorecard</span>
<div style="left:335px;top:909px;width:207px;height:26px;background:#1f6a70;"></div>
<span style="left:350.50px;top:913px;font-size:16px;line-height:16px;color:#fff;letter-spacing:0.524px;">Improvement_Priorities</span>
<div style="left:544px;top:910px;width:1px;height:24px;background:#ababab;"></div>
<div style="left:547px;top:909px;width:199px;height:26px;background:#c00000;"></div>
<span style="left:561.50px;top:913px;font-size:16px;line-height:16px;color:#fff;letter-spacing:-0.052px;">Pro_Tips_and_Mistakes</span>
<div style="left:748px;top:910px;width:1px;height:24px;background:#ababab;"></div>
<svg style="left:786px;top:912px" width="22" height="22" viewBox="0 0 22 22"><circle cx="11" cy="11" r="9.3" fill="none" stroke="#6e6e6e" stroke-width="1.2"/><path d="M6 11H16M11 6V16" stroke="#5a5a5a" stroke-width="1.6" fill="none"/></svg>
<div style="left:1150px;top:916px;width:3px;height:3px;background:#ababab;"></div>
<div style="left:1150px;top:921px;width:3px;height:3px;background:#ababab;"></div>
<div style="left:1150px;top:926px;width:3px;height:3px;background:#ababab;"></div>
<div style="left:1170px;top:913px;width:19px;height:19px;background:#fff;box-sizing:border-box;border:1px solid #ababab"></div>
<div style="left:1176px;top:918px;width:0;height:0;border-top:5px solid transparent;border-bottom:5px solid transparent;border-right:6px solid #1a1a1a"></div>
<div style="left:1188px;top:913px;width:616px;height:19px;background:#fff;box-sizing:border-box;border:1px solid #ababab;border-left:2px solid #9a9a9a"></div>
<div style="left:1804px;top:913px;width:69px;height:19px;background:#f3f3f3;"></div>
<div style="left:1873px;top:913px;width:19px;height:19px;background:#fff;box-sizing:border-box;border:1px solid #ababab"></div>
<div style="left:1880px;top:918px;width:0;height:0;border-top:5px solid transparent;border-bottom:5px solid transparent;border-left:6px solid #1a1a1a"></div>
<div style="left:1897px;top:27px;width:21px;height:861px;background:#f3f3f3;"></div>
<div style="left:1898px;top:8px;width:19px;height:19px;background:#fff;box-sizing:border-box;border:1px solid #9a9a9a"></div>
<div style="left:1903px;top:14px;width:0;height:0;border-left:5px solid transparent;border-right:5px solid transparent;border-bottom:5px solid #1a1a1a"></div>
<div style="left:1898px;top:26px;width:19px;height:834px;background:#fff;box-sizing:border-box;border:1px solid #9a9a9a;border-top:2px solid #8c8c8c"></div>
<div style="left:1898px;top:887px;width:19px;height:19px;background:#fff;box-sizing:border-box;border:1px solid #9a9a9a"></div>
<div style="left:1903px;top:895px;width:0;height:0;border-left:5px solid transparent;border-right:5px solid transparent;border-top:5px solid #1a1a1a"></div>
<div style="left:0px;top:938px;width:1921px;height:1px;background:#c8c8c8;"></div>
<div style="left:0px;top:939px;width:1921px;height:26px;background:#f3f3f3;"></div>
<div style="left:0px;top:965px;width:1921px;height:1px;background:#8a8a8a;"></div>
<span style="left:14.50px;top:947px;font-size:12px;line-height:12px;color:#333;letter-spacing:0.203px;">Ready</span>
<svg style="left:76px;top:942px" width="18" height="18" viewBox="0 0 18 18"><rect x="2.5" y="3.5" width="13" height="13" fill="#fff" stroke="#5e5e5e" stroke-width="1"/><rect x="9" y="3" width="7" height="3.6" fill="#5e5e5e"/><path d="M8 8.5h2M11 8.5h2M5 11.5h2M8 11.5h2M11 11.5h2M5 14.5h2M8 14.5h2M11 14.5h2" stroke="#5e5e5e" stroke-width="1" shape-rendering="crispEdges"/><circle cx="4.4" cy="5.4" r="3.6" fill="#5e5e5e"/></svg>
<svg style="left:112px;top:940px" width="26" height="26" viewBox="0 0 26 26" fill="none" stroke="#4a4a4a"><path d="M9.8 5.3A7.4 7.4 0 0 0 10.9 19.6" stroke-width="1.2" stroke-dasharray="3 1.7"/><path d="M11.5 4V12M9.2 9.9L11.5 12.5L13.8 9.9" stroke-width="1.1"/><path d="M15 10.4H20M17.8 8L20.2 10.4L17.8 12.8" stroke-width="1.1"/><path d="M13.6 13.6L22.4 21.4" stroke-width="1.4"/><path d="M22.2 14.2L13.6 21.6" stroke-width="2.1"/></svg>
<span style="left:138.00px;top:947px;font-size:12px;line-height:12px;color:#262626;font-weight:700;word-spacing:-0.129px;"><span style="display:inline-block;width:79.75px;letter-spacing:0.170px">Accessibility:</span> <span style="display:inline-block;width:69.03px;letter-spacing:0.575px">Investigate</span></span>
<svg style="left:1408px;top:942px" width="22" height="22" viewBox="0 0 22 22"><rect x="1" y="1" width="19" height="13" rx="1.6" fill="#505050"/><path d="M5 19l1.2-1.6h3.6v1.6z" fill="#505050"/><circle cx="14.5" cy="14.3" r="6.3" fill="#f3f3f3"/><path d="M15.21,10.67 L16.19,9.38 L17.91,10.38 L17.29,11.87 L18.00,13.10 L19.60,13.31 L19.60,15.29 L18.00,15.50 L17.29,16.73 L17.91,18.22 L16.19,19.22 L15.21,17.93 L13.79,17.93 L12.81,19.22 L11.09,18.22 L11.71,16.73 L11.00,15.50 L9.40,15.29 L9.40,13.31 L11.00,13.10 L11.71,11.87 L11.09,10.38 L12.81,9.38 L13.79,10.67Z" fill="#505050"/><circle cx="14.5" cy="14.3" r="1.9" fill="#fcfcfc"/></svg>
<span style="left:1430.80px;top:947px;font-size:12px;line-height:12px;color:#333;word-spacing:-0.129px;"><span style="display:inline-block;width:41.90px;letter-spacing:0.362px">Display</span> <span style="display:inline-block;width:45.89px;letter-spacing:0.316px">Settings</span></span>
<div style="left:1547px;top:938px;width:50px;height:27px;background:#c6c6c6;"></div>
<svg style="left:1564px;top:944px" width="16" height="16" viewBox="0 0 16 16" shape-rendering="crispEdges"><rect x="0" y="0" width="16" height="16" fill="#d2d2d2"/><path d="M.5 0v16M5.5 0v16M10.5 0v16M15.5 0v16M0 .5h16M0 5.5h16M0 10.5h16M0 15.5h16" stroke="#6a6a6a" stroke-width="1" fill="none"/></svg>
<svg style="left:1613px;top:944px" width="17" height="15" viewBox="0 0 17 15" shape-rendering="crispEdges" fill="none" stroke="#6a6a6a"><rect x=".5" y=".5" width="16" height="14" fill="#fcfcfc"/><rect x="4.5" y="2.5" width="8" height="10"/><path d="M6 5.5h5M6 7.5h5M6 9.5h5"/></svg>
<svg style="left:1663px;top:944px" width="17" height="16" viewBox="0 0 17 16" shape-rendering="crispEdges" fill="none" stroke="#6a6a6a"><rect x=".5" y=".5" width="16" height="15" fill="#fcfcfc"/><path d="M0 9.5h11.5V0M5.5 0v9.5"/></svg>
<div style="left:1704px;top:951px;width:10px;height:1px;background:#444;"></div>
<div style="left:1720px;top:952px;width:125px;height:1px;background:#444;"></div>
<div style="left:1780px;top:945px;width:6px;height:14px;background:#444;"></div>
<div style="left:1851px;top:951px;width:10px;height:1px;background:#444;"></div>
<div style="left:1855px;top:947px;width:1px;height:10px;background:#444;"></div>
<span style="left:1878.00px;top:947px;font-size:12px;line-height:12px;color:#444;letter-spacing:-0.234px;">100%</span>
<div style="left:1919px;top:0px;width:1px;height:966px;background:#f4f4f4;"></div>
<div style="left:1920px;top:0px;width:1px;height:966px;background:#111;"></div>
</div>
</body></html>
